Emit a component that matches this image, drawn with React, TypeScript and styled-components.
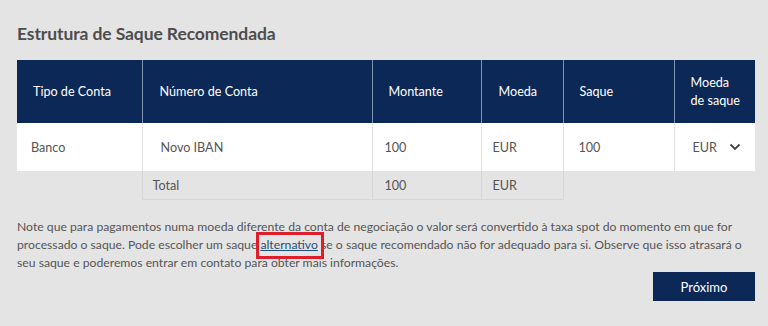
import styled, { createGlobalStyle } from "styled-components";

const GlobalStyle = createGlobalStyle`
  body {
    margin: 0;
    background: #e4e4e4;
    font-family: Lato, "Open Sans", sans-serif;
  }
`;

const navy = "#0c2856";

const Page = styled.div`
  width: 768px;
  height: 326px;
  box-sizing: border-box;
  padding: 24px 13px 0 17px;
  color: #555;
`;

const Title = styled.h2`
  margin: 0 0 16px;
  font-size: 17.5px;
  font-weight: 700;
  color: #4d4d4d;
  line-height: 20px;
  letter-spacing: -0.1px;
`;

const Table = styled.table`
  width: 738px;
  border-collapse: collapse;
  table-layout: fixed;
  font-size: 12.6px;
`;

const Head = styled.th<{ $pad?: number }>`
  background: ${navy};
  color: #fff;
  font-weight: 400;
  text-align: left;
  height: 63px;
  padding: 0 6px 0 ${(p) => p.$pad ?? 16}px;
  border-left: 1px solid #7f93b3;
  line-height: 18px;
  &:first-child {
    border-left: none;
  }
`;

const Cell = styled.td<{ $pad?: number }>`
  background: #fff;
  height: 48px;
  padding: 0 8px 0 ${(p) => p.$pad ?? 12}px;
  border-left: 1px solid #e2e2e2;
  &:first-child {
    border-left: none;
  }
`;

const TotalCell = styled.td<{ $pad?: number; $empty?: boolean }>`
  height: 28px;
  padding: 0 8px 0 ${(p) => p.$pad ?? 12}px;
  border: ${(p) => (p.$empty ? "none" : "1px solid #d6d6d6")};
  border-top: none;
`;

const Select = styled.div`
  display: flex;
  align-items: center;
  gap: 12px;
`;

const Note = styled.p`
  margin: 18px 0 0;
  font-size: 12.2px;
  line-height: 18px;
  color: #555;
`;

const Link = styled.a`
  position: relative;
  color: #1f4f7d;
  text-decoration: underline;

  &::after {
    content: "";
    position: absolute;
    left: -4px;
    right: -6px;
    top: -5px;
    bottom: -7px;
    border: 3px solid #dc1f2b;
  }
`;

const Footer = styled.div`
  display: flex;
  justify-content: flex-end;
`;

const Button = styled.button`
  width: 102px;
  height: 29px;
  border: none;
  background: ${navy};
  color: #fff;
  font-family: inherit;
  font-size: 13px;
  cursor: pointer;
`;

const Chevron = () => (
  <svg width="12" height="8" viewBox="0 0 12 8" fill="none">
    <path d="M1.5 1.5 6 6l4.5-4.5" stroke="#444" strokeWidth="1.8" />
  </svg>
);

export default function App() {
  return (
    <Page>
      <GlobalStyle />
      <Title>Estrutura de Saque Recomendada</Title>
      <Table>
        <colgroup>
          <col style={{ width: 125 }} />
          <col style={{ width: 230 }} />
          <col style={{ width: 109 }} />
          <col style={{ width: 82 }} />
          <col style={{ width: 111 }} />
          <col style={{ width: 81 }} />
        </colgroup>
        <thead>
          <tr>
            <Head>Tipo de Conta</Head>
            <Head $pad={17}>Número de Conta</Head>
            <Head>Montante</Head>
            <Head $pad={17}>Moeda</Head>
            <Head>Saque</Head>
            <Head>
              Moeda
              <br />
              de saque
            </Head>
          </tr>
        </thead>
        <tbody>
          <tr>
            <Cell $pad={14}>Banco</Cell>
            <Cell $pad={18}>Novo IBAN</Cell>
            <Cell>100</Cell>
            <Cell $pad={11}>EUR</Cell>
            <Cell $pad={15}>100</Cell>
            <Cell $pad={18}>
              <Select>
                EUR <Chevron />
              </Select>
            </Cell>
          </tr>
          <tr>
            <TotalCell $empty />
            <TotalCell $pad={10}>Total</TotalCell>
            <TotalCell>100</TotalCell>
            <TotalCell $pad={11}>EUR</TotalCell>
            <TotalCell $empty />
            <TotalCell $empty />
          </tr>
        </tbody>
      </Table>
      <Note>
        Note que para pagamentos numa moeda diferente da conta de negociação o valor será
        convertido à taxa spot do momento em que for processado o saque. Pode escolher um
        saque <Link>alternativo</Link> se o saque recomendado não for adequado para si.
        Observe que isso atrasará o seu saque e poderemos entrar em contato para obter mais
        informações.
      </Note>
      <Footer>
        <Button>Próximo</Button>
      </Footer>
    </Page>
  );
}
